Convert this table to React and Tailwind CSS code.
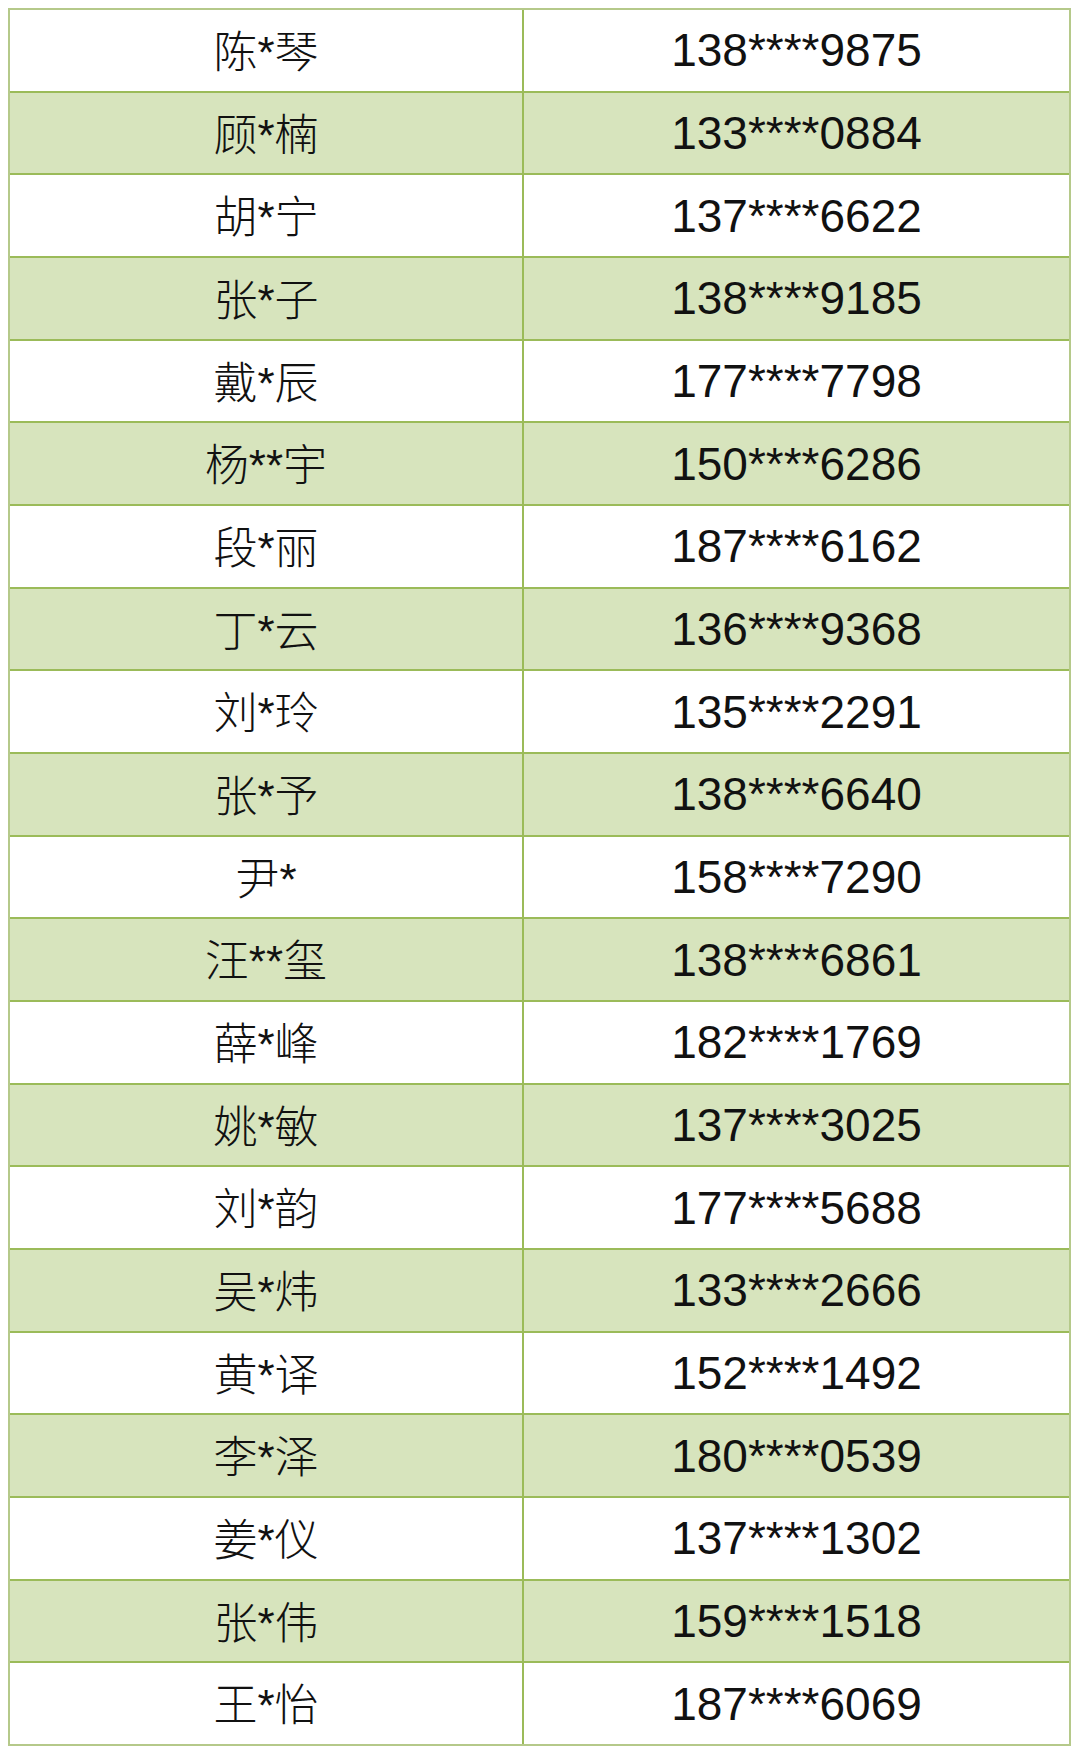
const rows = [
  ["陈*琴", "138****9875"],
  ["顾*楠", "133****0884"],
  ["胡*宁", "137****6622"],
  ["张*子", "138****9185"],
  ["戴*辰", "177****7798"],
  ["杨**宇", "150****6286"],
  ["段*丽", "187****6162"],
  ["丁*云", "136****9368"],
  ["刘*玲", "135****2291"],
  ["张*予", "138****6640"],
  ["尹*", "158****7290"],
  ["汪**玺", "138****6861"],
  ["薛*峰", "182****1769"],
  ["姚*敏", "137****3025"],
  ["刘*韵", "177****5688"],
  ["吴*炜", "133****2666"],
  ["黄*译", "152****1492"],
  ["李*泽", "180****0539"],
  ["姜*仪", "137****1302"],
  ["张*伟", "159****1518"],
  ["王*怡", "187****6069"],
];

export default function App() {
  return (
    <div className="w-[1080px] h-[1755px] bg-white pt-[8px] pl-[8px]">
      <div className="w-[1063px] h-[1738px] flex flex-col border-2 border-[#b5c98a]">
        {rows.map(([name, phone], i) => (
          <div
            key={i}
            className={
              "flex-1 flex " +
              (i < rows.length - 1 ? "border-b-2 border-[#9bbb59] " : "") +
              (i % 2 === 1 ? "bg-[#d7e4bd]" : "bg-white")
            }
          >
            <div
              className="w-[514px] flex items-center justify-center pt-[5px] border-r-2 border-[#9bbb59] text-[44px] font-light text-[#111] leading-none"
              style={{ fontFamily: '"Liberation Sans", "Noto Sans CJK SC", sans-serif' }}
            >
              {name}
            </div>
            <div
              className="flex-1 flex items-center justify-center text-[46px] text-[#111] leading-none"
              style={{ fontFamily: '"Liberation Sans", Arial, sans-serif' }}
            >
              {phone}
            </div>
          </div>
        ))}
      </div>
    </div>
  );
}
